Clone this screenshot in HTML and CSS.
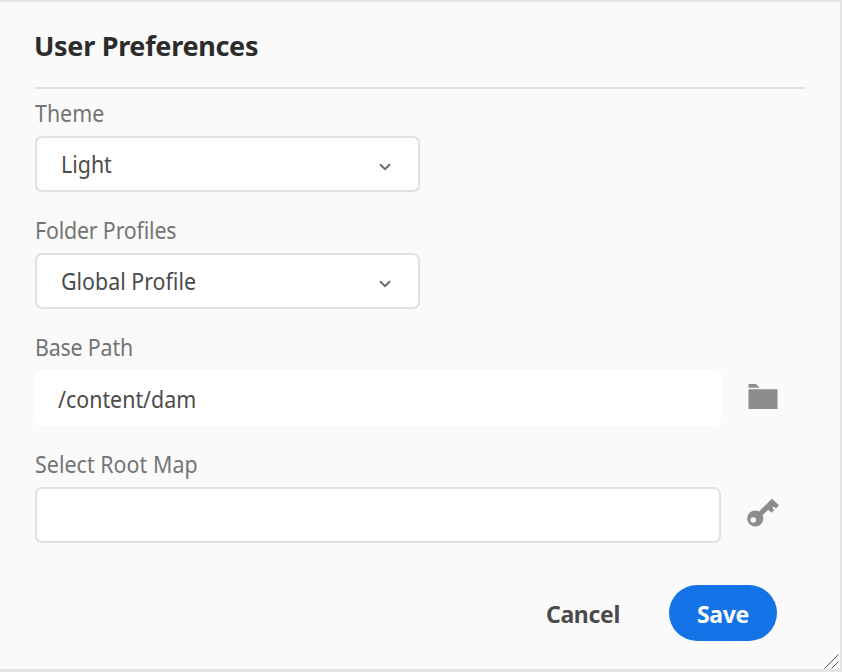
FILE: index.html
```html
<!DOCTYPE html>
<html lang="en">
<head>
<meta charset="utf-8">
<title>User Preferences</title>
<link rel="stylesheet" href="styles.css">
</head>
<body>
<main class="dialog">
  <h1 class="title">User Preferences</h1>
  <form class="fields">
    <div class="field">
      <label class="label"><span class="text">Theme</span></label>
      <div class="box select"><span class="text">Light</span>
        <svg class="chevron" width="14" height="10" viewBox="0 0 14 10"><path d="M2 2.200 7 7.200 12 2.200"/></svg>
      </div>
    </div>
    <div class="field">
      <label class="label"><span class="text tight">Folder Profiles</span></label>
      <div class="box select"><span class="text">Global Profile</span>
        <svg class="chevron" width="14" height="10" viewBox="0 0 14 10"><path d="M2 2.200 7 7.200 12 2.200"/></svg>
      </div>
    </div>
    <div class="field">
      <label class="label"><span class="text tight">Base Path</span></label>
      <div class="row">
        <div class="box input plain"><span class="text">/content/dam</span></div>
        <svg class="icon" width="36" height="36" viewBox="0 0 36 36"><path d="M3.500 5h7.500l3.500 3.800H3.500zM3.500 10.200h29V30h-29z"/></svg>
      </div>
    </div>
    <div class="field">
      <label class="label"><span class="text loose">Select Root Map</span></label>
      <div class="row">
        <div class="box input"></div>
        <svg class="icon key" width="36" height="36" viewBox="0 0 36 36"><path fill-rule="evenodd" d="M14 16.500 27 3.800 34 10.300 31 13.500 28.600 11.500 27.300 12.800 29.300 15 26.600 17.800 23.200 14.800 17.500 20.200A8 8 0 1 1 14 16.500ZM8.300 22.200a2.800 2.800 0 1 0 0 5.600a2.800 2.800 0 1 0 0-5.600Z"/></svg>
      </div>
    </div>
  </form>
  <footer class="actions">
    <button class="button" type="button">Cancel</button>
    <button class="button primary" type="button">Save</button>
  </footer>
  <svg class="grip" width="15" height="15" viewBox="0 0 15 15"><path d="M.5 14.500 14.500.5M7.500 14.500 14.500 7.500"/></svg>
</main>
</body>
</html>
```
FILE: styles.css
```css
* { box-sizing: border-box; }
body {
  margin: 0;
  font-family: "Noto Sans", "Open Sans", sans-serif;
  font-size: 23px;
  color: #4b4b4b;
}
.dialog {
  position: relative;
  width: 842px;
  height: 672px;
  padding: 0 35px;
  background: #fafafa;
  border: solid #e4e4e4;
  border-width: 2px 2px 3px 0;
  overflow: hidden;
}
.title {
  width: 770px;
  height: 87px;
  margin: 0;
  padding-top: 26px;
  border-bottom: 2px solid #e1e1e1;
  font-size: 27px;
  line-height: 36px;
  font-weight: 700;
  letter-spacing: -0.3px;
  text-indent: -1px;
  color: #2c2c2c;
}
.fields {
  display: grid;
  gap: 23px;
  padding-top: 8px;
}
.field { height: 94px; }
.label {
  display: block;
  height: 39px;
  line-height: 32px;
  color: #747474;
}
.text {
  display: inline-block;
  white-space: nowrap;
  transform: scaleX(0.93);
  transform-origin: left;
}
.tight { letter-spacing: -0.2px; }
.loose { letter-spacing: 0.05px; }
.box {
  display: flex;
  align-items: center;
  height: 56px;
  background: #fff;
  border: 2px solid #e1e1e1;
  border-radius: 7px;
}
.select {
  width: 385px;
  justify-content: space-between;
  padding: 0 26px 0 24px;
}
.chevron { fill: none; stroke: #6b6b6b; stroke-width: 2; margin-top: 5px; }
.row { display: flex; align-items: center; gap: 24px; }
.input { width: 686px; padding-left: 21px; }
.plain { border-color: #fff; }
.plain .text { margin-top: 1px; }
.icon { fill: #8d8d8d; margin-top: -3px; }
.key { margin-top: -5px; }
.actions {
  display: flex;
  justify-content: flex-end;
  padding: 43px 28px 0 0;
}
.button {
  height: 56px;
  padding: 2px 0 0;
  width: 108px;
  border: 0;
  border-radius: 28px;
  background: transparent;
  font: 700 23px "Noto Sans", sans-serif;
  letter-spacing: -0.3px;
  color: #4b4b4b;
}
.primary { margin-left: 32px; background: #1473e6; color: #fff; }
.grip {
  position: absolute;
  right: 1px;
  bottom: 0;
  fill: none;
  stroke: #555;
  stroke-width: 1;
}
```
